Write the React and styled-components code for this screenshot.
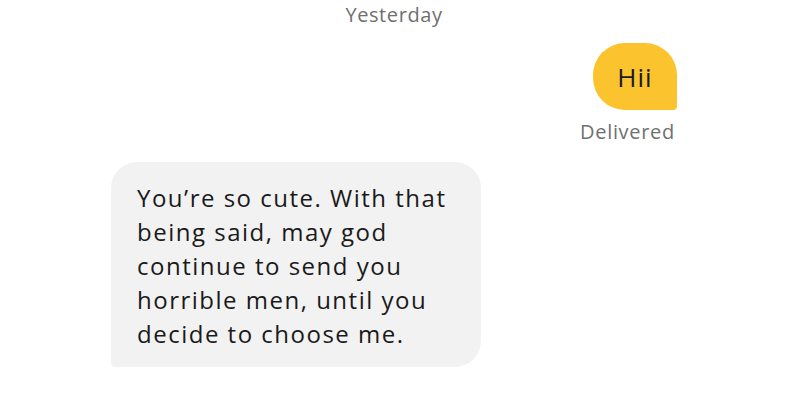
import React from "react";
import styled, { createGlobalStyle } from "styled-components";

const GlobalStyle = createGlobalStyle`
  body {
    margin: 0;
    background: #fff;
    font-family: "Open Sans", "Noto Sans", sans-serif;
  }
`;

const Chat = styled.div`
  width: 788px;
  height: 400px;
  box-sizing: border-box;
  padding: 4px 111px 0;
  display: flex;
  flex-direction: column;
  overflow: hidden;
`;

const DateLabel = styled.div`
  align-self: center;
  color: #6f6f6f;
  font-size: 20px;
  line-height: 22px;
  letter-spacing: 0.6px;
`;

const Bubble = styled.div`
  box-sizing: border-box;
  color: #1a1a1a;
  ${({ $mine }) =>
    $mine
      ? `
    align-self: flex-end;
    margin-top: 17px;
    width: 84px;
    height: 67px;
    display: flex;
    align-items: center;
    justify-content: center;
    font-size: 26px;
    letter-spacing: 1px;
    background: #fbc42f;
    border-radius: 32px 32px 4px 32px;
  `
      : `
    align-self: flex-start;
    margin-top: 19px;
    width: 370px;
    padding: 19px 26px 16px;
    font-size: 24px;
    line-height: 34px;
    letter-spacing: 1.5px;
    background: #f2f2f2;
    border-radius: 26px 26px 26px 4px;
  `}
`;

const Status = styled.div`
  align-self: flex-end;
  margin-top: 11px;
  margin-right: 2px;
  color: #707070;
  font-size: 20px;
  line-height: 22px;
  letter-spacing: 0.7px;
`;

export default function App() {
  return (
    <>
      <GlobalStyle />
      <Chat>
        <DateLabel>Yesterday</DateLabel>
        <Bubble $mine>Hii</Bubble>
        <Status>Delivered</Status>
        <Bubble>
          You’re so cute. With that being said, may god continue to send you
          horrible men, until you decide to choose me.
        </Bubble>
      </Chat>
    </>
  );
}
